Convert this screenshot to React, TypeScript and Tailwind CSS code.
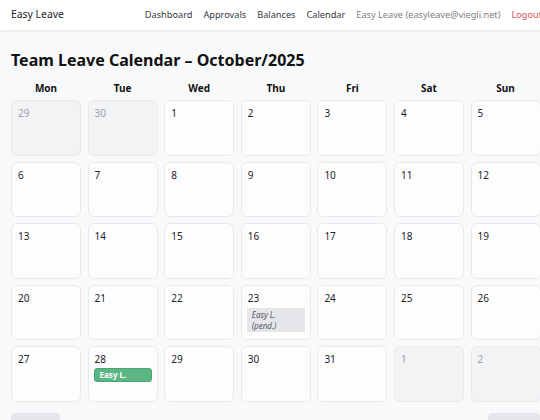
import React from "react";

type Day = {
    n: number;
    muted?: boolean;
    event?: { label: string; pending?: boolean };
};

const weekdays = ["Mon", "Tue", "Wed", "Thu", "Fri", "Sat", "Sun"];

const buildDays = (): Day[] => {
    const days: Day[] = [{ n: 29, muted: true }, { n: 30, muted: true }];
    for (let i = 1; i <= 31; i++) {
        const d: Day = { n: i };
        if (i === 23) d.event = { label: "Easy L. (pend.)", pending: true };
        if (i === 28) d.event = { label: "Easy L." };
        days.push(d);
    }
    days.push({ n: 1, muted: true }, { n: 2, muted: true });
    return days;
};

const DayCell = ({ day }: { day: Day }) => (
    <div
        className={`h-[55.5px] rounded-md border border-[#e8e9ec] pl-[6px] pr-[4px] pt-[5px] ${
            day.muted ? "bg-[#f2f3f5]" : "bg-[#fdfdfe]"
        }`}
    >
        <div className={`text-[10px] leading-[14px] ${day.muted ? "text-[#9aa0a6]" : "text-[#1f2328]"}`}>{day.n}</div>
        {day.event && day.event.pending && (
            <div className="-ml-[1px] mt-[3px] w-[58px] rounded-[3px] bg-[#e5e6e9] px-[5px] py-[1px] text-[8px] italic leading-[11px] text-[#55595f]">
                Easy L.
                <br />
                (pend.)
            </div>
        )}
        {day.event && !day.event.pending && (
            <div className="-ml-[1px] mt-[2px] w-[58px] rounded-[3px] border border-[#4ea472] bg-[#5cb584] px-[5px] text-[8px] font-bold leading-[12px] text-white">
                {day.event.label}
            </div>
        )}
    </div>
);

export default function App() {
    const days = buildDays();
    return (
        <div className="h-[420px] w-[540px] overflow-hidden bg-[#f8f9fb] font-['Noto_Sans',sans-serif] text-[#212529]">
            <nav className="flex h-[30px] w-[580px] items-center whitespace-nowrap bg-white px-[11px] shadow-[0_1px_3px_rgba(0,0,0,0.08)]">
                <span className="text-[10.4px] text-[#212529]">Easy Leave</span>
                <div className="ml-[81px] flex items-center gap-[11px] text-[9.2px] text-[#343a40]">
                    <span>Dashboard</span>
                    <span>Approvals</span>
                    <span>Balances</span>
                    <span>Calendar</span>
                    <span className="text-[#7a7f85]">Easy Leave (easyleave@viegli.net)</span>
                    <span className="text-[#d9534f]">Logout</span>
                </div>
            </nav>

            <main className="w-[560px] px-[11px]">
                <h1 className="mt-[19px] text-[16px] font-bold leading-[22px] text-[#111]">
                    Team Leave Calendar – October/2025
                </h1>

                <div className="mt-[10px] grid w-[530px] grid-cols-[repeat(7,70px)] gap-x-[6.6px]">
                    {weekdays.map((w) => (
                        <div key={w} className="text-center text-[10px] font-bold leading-[14px] text-[#111]">
                            {w}
                        </div>
                    ))}
                </div>

                <div className="mt-[5px] grid w-[530px] grid-cols-[repeat(7,70px)] gap-x-[6.6px] gap-y-[6px]">
                    {days.map((d, i) => (
                        <DayCell key={i} day={d} />
                    ))}
                </div>

                <div className="mt-[11px] flex w-[529px] justify-between">
                    <div className="h-[24px] w-[49px] rounded-[4px] bg-[#e6e7ea]" />
                    <div className="h-[24px] w-[52px] rounded-[4px] bg-[#e6e7ea]" />
                </div>
            </main>
        </div>
    );
}
